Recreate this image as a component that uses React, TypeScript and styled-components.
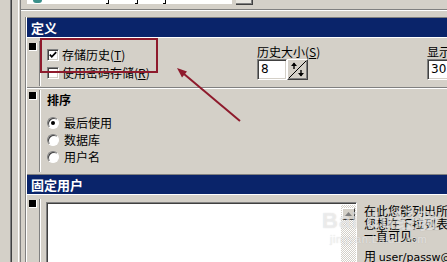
import React from 'react';
import styled, { createGlobalStyle } from 'styled-components';

const Global = createGlobalStyle`
  html, body { margin: 0; padding: 0; background: #d4d0c8; }
  body {
    width: 447px; height: 262px; overflow: hidden;
    font-family: "Noto Sans CJK SC", "Liberation Sans", sans-serif;
    font-size: 12px; color: #000;
  }
  * { box-sizing: border-box; }
`;

const Page = styled.div`
  position: relative;
  display: flex;
  width: 447px;
  height: 262px;
  overflow: hidden;
  background: #d4d0c8;
`;

const LeftRail = styled.div`
  width: 20px;
  flex: none;
  background: linear-gradient(
    to right,
    #d4d0c8 0 10px,
    #808080 10px 11px,
    #404040 11px 12px,
    #d4d0c8 12px 18px,
    #ffffff 18px 19px,
    #d4d0c8 19px 20px
  );
`;

const Main = styled.div`
  flex: 1;
  min-width: 0;
  display: flex;
  flex-direction: column;
  border-left: 1px solid #808080;
`;

const TopStrip = styled.div`
  height: 9px;
  flex: none;
  display: flex;
  align-items: flex-start;
`;

const TopField = styled.div`
  margin-left: 6px;
  width: 205px;
  height: 5px;
  background: #fff;
  border-bottom: 1px solid #d4d0c8;
  position: relative;
  display: flex;
  align-items: flex-start;
`;

const TealIcon = styled.div`
  margin-left: 6px;
  width: 9px;
  height: 3px;
  border-radius: 0 0 4px 4px;
  background: #3a8f8a;
`;

const Tick = styled.div<{ $left: number }>`
  position: absolute;
  left: ${(p) => p.$left}px;
  top: 0;
  width: 3px;
  height: 4px;
  border-right: 1px solid #000;
  border-bottom: 1px solid #000;
`;

const TopButton = styled.div`
  margin-left: 4px;
  width: 17px;
  height: 5px;
  background: #e8e6e0;
  border-right: 1px solid #404040;
  border-bottom: 1px solid #404040;
  box-shadow: inset -1px -1px 0 #808080;
`;

const Groove = styled.div`
  flex: none;
  height: 2px;
  border-top: 1px solid #808080;
  border-bottom: 1px solid #ffffff;
`;

const Panel = styled.div`
  margin-top: 6px;
  margin-left: 4px;
  flex: 1;
  display: flex;
  flex-direction: column;
  border-left: 1px solid #808080;
`;

const PanelInner = styled.div`
  flex: 1;
  display: flex;
  flex-direction: column;
  border-left: 1px solid #ffffff;
`;

const Header = styled.div`
  flex: none;
  height: 21px;
  border-top: 1px solid #808080;
  border-bottom: 1px solid #ffffff;
  background: #0a246a;
  color: #fff;
  font-weight: 700;
  font-size: 13px;
  line-height: 19px;
  padding-left: 4px;
  white-space: nowrap;
`;

const SectionBody = styled.div<{ $h?: number }>`
  flex: ${(p) => (p.$h ? 'none' : '1')};
  height: ${(p) => (p.$h ? `${p.$h}px` : 'auto')};
  display: flex;
  align-items: stretch;
`;

const BulletCol = styled.div`
  width: 12px;
  flex: none;
  padding-left: 2px;
`;

const Bullet = styled.div<{ $top: number }>`
  margin-top: ${(p) => p.$top}px;
  width: 8px;
  height: 8px;
  background: #000;
  border-right: 1px solid #fff;
  border-bottom: 1px solid #fff;
`;

const VRail = styled.div<{ $top: number; $bottom: number }>`
  width: 2px;
  flex: none;
  margin-top: ${(p) => p.$top}px;
  margin-bottom: ${(p) => p.$bottom}px;
  border-left: 1px solid #808080;
  border-right: 1px solid #ffffff;
`;

const Content = styled.div`
  flex: 1;
  min-width: 0;
  padding-left: 6px;
  display: flex;
`;

const CheckGroup = styled.div`
  width: 210px;
  flex: none;
  padding-top: 8px;
  display: flex;
  flex-direction: column;
`;

const OptRow = styled.div<{ $h: number }>`
  height: ${(p) => p.$h}px;
  display: flex;
  align-items: center;
  white-space: nowrap;
  line-height: 14px;
`;

const Box = styled.div`
  width: 12px;
  height: 12px;
  flex: none;
  background: #fff;
  border: 1px solid;
  border-color: #808080 #ffffff #ffffff #808080;
  box-shadow: inset 1px 1px 0 #404040, inset -1px -1px 0 #d4d0c8;
  display: flex;
  align-items: center;
  justify-content: center;
  margin-right: 3px;
`;

const Radio = styled.div`
  width: 12px;
  height: 12px;
  flex: none;
  border-radius: 50%;
  background: #fff;
  border: 1px solid;
  border-color: #808080 #ffffff #ffffff #808080;
  box-shadow: inset 1px 1px 0 #404040;
  display: flex;
  align-items: center;
  justify-content: center;
  margin-right: 5px;
`;

const Dot = styled.div`
  width: 4px;
  height: 4px;
  border-radius: 50%;
  background: #000;
`;

const U = styled.span`
  text-decoration: underline;
`;

const FieldGroup = styled.div<{ $w: number }>`
  width: ${(p) => p.$w}px;
  flex: none;
  padding-top: 7px;
  display: flex;
  flex-direction: column;
`;

const Label = styled.div`
  height: 13px;
  line-height: 13px;
  white-space: nowrap;
`;

const SpinRow = styled.div`
  margin-top: 1px;
  display: flex;
  height: 21px;
`;

const TextField = styled.div<{ $w: number }>`
  width: ${(p) => p.$w}px;
  height: 21px;
  background: #fff;
  border: 1px solid;
  border-color: #808080 #ffffff #ffffff #808080;
  box-shadow: inset 1px 1px 0 #404040, inset -1px -1px 0 #d4d0c8;
  padding-left: 3px;
  font-family: "DejaVu Sans", "Liberation Sans", sans-serif;
  font-size: 12px;
  line-height: 18px;
`;

const SpinButton = styled.div`
  width: 21px;
  height: 21px;
  background: #d4d0c8;
  border: 1px solid;
  border-color: #ffffff #404040 #404040 #ffffff;
  box-shadow: inset -1px -1px 0 #808080;
`;

const SortTitle = styled.div`
  margin-top: 4px;
  height: 14px;
  line-height: 14px;
  font-weight: 700;
  font-size: 12px;
`;

const RadioList = styled.div`
  margin-top: 7px;
  display: flex;
  flex-direction: column;
`;

const Column = styled.div`
  display: flex;
  flex-direction: column;
`;

const ListBox = styled.div`
  margin-top: 7px;
  margin-left: -1px;
  width: 311px;
  height: 80px;
  flex: none;
  display: flex;
  background: #fff;
  border: 1px solid;
  border-color: #808080 #ffffff #ffffff #808080;
  box-shadow: inset 1px 1px 0 #404040;
  padding: 2px 0 0 2px;
`;

const ListArea = styled.div`
  flex: 1;
  background: #fff;
`;

const ScrollBar = styled.div`
  width: 15px;
  flex: none;
  background-color: #ffffff;
  background-image: repeating-conic-gradient(#d4d0c8 0 25%, #ffffff 0 50%);
  background-size: 2px 2px;
  padding: 3px 1px 0 1px;
`;

const ScrollUp = styled.div`
  width: 13px;
  height: 12px;
  background: #d4d0c8;
  border: 1px solid;
  border-color: #ffffff #404040 #404040 #ffffff;
  display: flex;
  align-items: center;
  justify-content: center;
`;

const Help = styled.div`
  margin-left: 7px;
  margin-top: 10px;
  white-space: nowrap;
  line-height: 12.5px;
  font-size: 12px;
`;

const HelpPara = styled.div<{ $gap: number }>`
  margin-top: ${(p) => p.$gap}px;
`;

const Mono = styled.span`
  font-family: "DejaVu Sans", "Liberation Sans", sans-serif;
  font-size: 11px;
`;

const Watermark = styled.div`
  position: absolute;
  left: 322px;
  top: 209px;
  color: rgba(255, 255, 255, 0.55);
  text-shadow: 0 0 1px rgba(130, 130, 130, 0.35);
  pointer-events: none;
  display: flex;
  flex-direction: column;
  align-items: flex-start;
`;

const WmBig = styled.div`
  font-family: "Liberation Sans", sans-serif;
  font-weight: 700;
  font-size: 22px;
  line-height: 24px;
  letter-spacing: 1px;
`;

const WmSmall = styled.div`
  font-family: "Liberation Sans", sans-serif;
  font-size: 11px;
  line-height: 12px;
  margin-left: 8px;
  letter-spacing: 0.5px;
`;

const Overlay = styled.svg`
  position: absolute;
  left: 0;
  top: 0;
  pointer-events: none;
`;

export default function App() {
  return (
    <>
      <Global />
      <Page>
        <LeftRail />
        <Main>
          <TopStrip>
            <TopField>
              <TealIcon />
              <Tick $left={79} />
              <Tick $left={108} />
              <Tick $left={136} />
            </TopField>
            <TopButton />
          </TopStrip>
          <Groove />
          <Panel>
            <PanelInner>
              <Header>定义</Header>
              <SectionBody $h={49}>
                <BulletCol>
                  <Bullet $top={5} />
                </BulletCol>
                <VRail $top={3} $bottom={1} />
                <Content>
                  <CheckGroup>
                    <OptRow $h={18}>
                      <Box>
                        <svg width="8" height="8" viewBox="0 0 8 8">
                          <polyline points="0.8,3.6 2.8,5.8 7.2,1.2" fill="none" stroke="#000" strokeWidth="1.7" />
                        </svg>
                      </Box>
                      存储历史(<U>T</U>)
                    </OptRow>
                    <OptRow $h={18}>
                      <Box />
                      使用密码存储(<U>R</U>)
                    </OptRow>
                  </CheckGroup>
                  <FieldGroup $w={170}>
                    <Label>历史大小(<U>S</U>)</Label>
                    <SpinRow>
                      <TextField $w={30}>8</TextField>
                      <SpinButton>
                        <svg width="19" height="19" viewBox="0 0 19 19">
                          <line x1="1" y1="18" x2="18" y2="1" stroke="#000" strokeWidth="1" />
                          <line x1="6" y1="3" x2="6" y2="9" stroke="#000" strokeWidth="1.4" />
                          <polygon points="3,6 6,2.5 9,6" fill="#000" />
                          <line x1="13" y1="10" x2="13" y2="16" stroke="#000" strokeWidth="1.4" />
                          <polygon points="10,13 13,16.5 16,13" fill="#000" />
                        </svg>
                      </SpinButton>
                    </SpinRow>
                  </FieldGroup>
                  <FieldGroup $w={80}>
                    <Label>显示行数(<U>L</U>)</Label>
                    <SpinRow>
                      <TextField $w={40}>30</TextField>
                    </SpinRow>
                  </FieldGroup>
                </Content>
              </SectionBody>
              <Groove />
              <SectionBody $h={85}>
                <BulletCol>
                  <Bullet $top={3} />
                </BulletCol>
                <VRail $top={1} $bottom={2} />
                <Content>
                  <Column>
                    <SortTitle>排序</SortTitle>
                    <RadioList>
                      <OptRow $h={17}>
                        <Radio>
                          <Dot />
                        </Radio>
                        最后使用
                      </OptRow>
                      <OptRow $h={17}>
                        <Radio />
                        数据库
                      </OptRow>
                      <OptRow $h={17}>
                        <Radio />
                        用户名
                      </OptRow>
                    </RadioList>
                  </Column>
                </Content>
              </SectionBody>
              <Header>固定用户</Header>
              <SectionBody>
                <BulletCol>
                  <Bullet $top={5} />
                </BulletCol>
                <VRail $top={4} $bottom={0} />
                <Content>
                  <ListBox>
                    <ListArea />
                    <ScrollBar>
                      <ScrollUp>
                        <svg width="7" height="4" viewBox="0 0 7 4">
                          <polygon points="0,4 3.5,0 7,4" fill="#808080" />
                        </svg>
                      </ScrollUp>
                    </ScrollBar>
                  </ListBox>
                  <Help>
                    <div>在此您能列出所</div>
                    <div>您想在下拉列表</div>
                    <div>一直可见。</div>
                    <HelpPara $gap={7}>
                      用 <Mono>user/passw@</Mono>
                    </HelpPara>
                  </Help>
                </Content>
              </SectionBody>
            </PanelInner>
          </Panel>
        </Main>
        <Watermark>
          <WmBig>Bai du经验</WmBig>
          <WmSmall>jingyan.baidu.com</WmSmall>
        </Watermark>
        <Overlay width="447" height="262" viewBox="0 0 447 262">
          <rect x="41" y="39" width="116" height="33" fill="none" stroke="#8e1a2c" strokeWidth="2" />
          <line x1="240" y1="121" x2="184" y2="74" stroke="#8e1a2c" strokeWidth="2" />
          <polygon points="177,68 187,71.5 182,77.5" fill="#8e1a2c" />
        </Overlay>
      </Page>
    </>
  );
}
